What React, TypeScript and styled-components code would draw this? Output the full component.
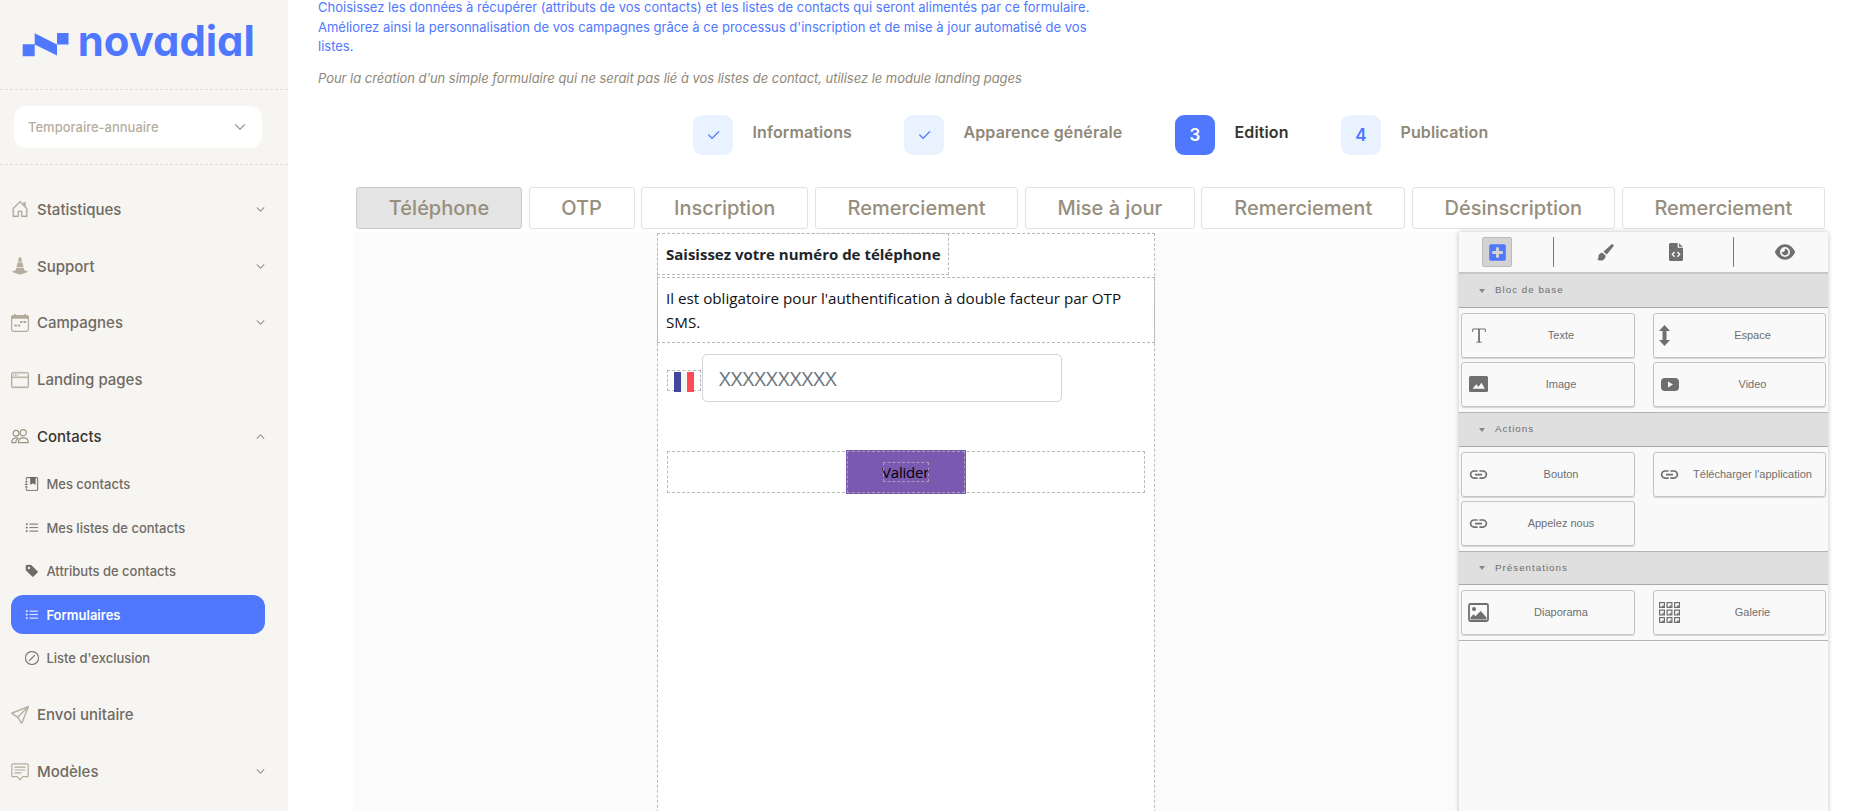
import React from 'react';
import {
    BsCheck2,
    BsChevronDown,
    BsChevronUp,
    BsConeStriped,
    BsHouseDoor,
    BsJournalBookmarkFill,
    BsListUl,
    BsSend,
    BsSlashCircle,
    BsTagFill,
    BsWindow,
} from 'react-icons/bs';
import { FaPlusSquare } from 'react-icons/fa';
import { FaEye } from 'react-icons/fa6';
import { MdLink } from 'react-icons/md';
import styled, { createGlobalStyle } from 'styled-components';

const GlobalStyle = createGlobalStyle`
    * {
        box-sizing: border-box;
    }
    body {
        margin: 0;
        overflow: hidden;
        background: #fff;
        font-family: Inter, sans-serif;
    }
`;

type MenuEntry = {
    label: string;
    icon: React.ReactNode;
    arrow?: 'up' | 'down';
    active?: boolean;
};

const MessageIcon = () => (
    <svg width="18" height="18" viewBox="0 0 18 18" fill="none" stroke="currentColor" strokeWidth="1.2">
        <path d="M2 .8h14a1.2 1.2 0 0 1 1.2 1.2v10.5a1.2 1.2 0 0 1-1.2 1.2h-4.2L9 16.8l-2.8-3.1H2a1.2 1.2 0 0 1-1.2-1.2V2A1.2 1.2 0 0 1 2 .8z" />
        <path d="M3.5 4.2h11M3.5 7h11M3.5 9.8h7" />
    </svg>
);

const CalendarIcon = () => (
    <svg width="18" height="18" viewBox="0 0 18 18">
        <rect x=".6" y="1.6" width="16.8" height="15.8" rx="1.8" fill="none" stroke="currentColor" strokeWidth="1.2" />
        <path d="M.6 4.8V3A1.4 1.4 0 0 1 2 1.6h1.3V0h1.5v1.6h8.4V0h1.5v1.6H16A1.4 1.4 0 0 1 17.4 3v1.8z" fill="currentColor" />
        <path d="M9 7h2.6v2H9zM12.5 7h2.6v2h-2.6zM3.3 10.5h2.6v2H3.3zM6.8 10.5h2.6v2H6.8z" fill="currentColor" />
    </svg>
);

const PeopleIcon = () => (
    <svg width="18" height="15" viewBox="0 0 18 15" fill="none" stroke="#9b9384" strokeWidth="1.2">
        <circle cx="5" cy="4.3" r="2.9" />
        <circle cx="12.2" cy="3.7" r="3.1" />
        <path d="M7.4 13.6c0-2.9 1.8-4.8 4.9-4.8s5 1.9 5 4.8z" />
        <path d="M6.8 9.2C3 8.3.7 10.3.7 13.6h4.1c0-1.7.7-3.2 2-4.4z" />
    </svg>
);

const mainMenu: MenuEntry[] = [
    { label: 'Statistiques', icon: <BsHouseDoor />, arrow: 'down' },
    { label: 'Support', icon: <BsConeStriped />, arrow: 'down' },
    { label: 'Campagnes', icon: <CalendarIcon />, arrow: 'down' },
    { label: 'Landing pages', icon: <BsWindow /> },
    { label: 'Contacts', icon: <PeopleIcon />, arrow: 'up', active: true },
];

const contactsMenu: MenuEntry[] = [
    { label: 'Mes contacts', icon: <BsJournalBookmarkFill /> },
    { label: 'Mes listes de contacts', icon: <BsListUl /> },
    { label: 'Attributs de contacts', icon: <BsTagFill /> },
    { label: 'Formulaires', icon: <BsListUl />, active: true },
    { label: "Liste d'exclusion", icon: <BsSlashCircle /> },
];

const bottomMenu: MenuEntry[] = [
    { label: 'Envoi unitaire', icon: <BsSend /> },
    { label: 'Modèles', icon: <MessageIcon />, arrow: 'down' },
];

const steps = [
    { label: 'Informations', mark: <BsCheck2 />, width: 211 },
    { label: 'Apparence générale', mark: <BsCheck2 />, width: 271 },
    { label: 'Edition', mark: '3', width: 166, current: true },
    { label: 'Publication', mark: '4', width: 160 },
];

const tabs = [
    { label: 'Téléphone', width: 166, selected: true },
    { label: 'OTP', width: 106 },
    { label: 'Inscription', width: 167 },
    { label: 'Remerciement', width: 203.5 },
    { label: 'Mise à jour', width: 170 },
    { label: 'Remerciement', width: 203.5 },
    { label: 'Désinscription', width: 203.5 },
    { label: 'Remerciement', width: 203.5 },
];

const BrushIcon = () => (
    <svg width="17" height="17" viewBox="0 0 17 17" fill="currentColor">
        <path d="M14.3.6c.7-.6 1.5-.6 2 0 .6.6.5 1.3 0 2L9.8 10.5 6.5 7.7z" />
        <path d="M5.7 8.9 8.6 11.5c.1 3.6-2.7 5.1-5.2 5.1-1.6 0-2.7-.6-3.4-1.5 1.2 0 1.4-.6 1.4-2.2 0-2.4 2.1-4.3 4.3-4z" />
    </svg>
);

const FileCodeIcon = () => (
    <svg width="14" height="18" viewBox="0 0 14 18">
        <path d="M1.5 0H8.7v4.7H14v11.8a1.5 1.5 0 0 1-1.5 1.5h-11A1.5 1.5 0 0 1 0 16.5v-15A1.5 1.5 0 0 1 1.5 0zM10 .2l3.8 3.5H10z" fill="currentColor" />
        <path d="M5.6 8.9 3.3 11.3l2.3 2.4M8.4 8.9l2.3 2.4-2.3 2.4" fill="none" stroke="#f9f9f9" strokeWidth="1.4" />
    </svg>
);

const TextIcon = () => (
    <svg width="14" height="15" viewBox="0 0 14 15" fill="none" stroke="currentColor">
        <path d="M.7 4V1h12.6v3M4.5 14.2h5" />
        <path d="M7 1v13" strokeWidth="1.8" />
    </svg>
);

const SpaceIcon = () => (
    <svg width="11" height="21" viewBox="0 0 11 21" fill="currentColor">
        <path d="M5.5 0 11 6H7.5v9H11l-5.5 6L0 15h3.5V6H0z" />
    </svg>
);

const ImageIcon = () => (
    <svg width="19" height="16" viewBox="0 0 19 16">
        <rect width="19" height="16" rx="1.5" fill="currentColor" />
        <path d="m3.5 12.8 3.8-4.6 2.2 2.6 3-4 3.3 6z" fill="#f9f9f9" />
    </svg>
);

const VideoIcon = () => (
    <svg width="18" height="13" viewBox="0 0 18 13">
        <rect width="18" height="13" rx="4" fill="currentColor" />
        <path d="m7 3.5 5 3-5 3z" fill="#f9f9f9" />
    </svg>
);

const SlideshowIcon = () => (
    <svg width="21" height="19" viewBox="0 0 21 19">
        <rect x="1" y="1" width="19" height="17" rx="1.5" fill="none" stroke="currentColor" strokeWidth="1.8" />
        <circle cx="6" cy="6" r="2" fill="currentColor" />
        <path d="M2.5 16.5v-2l3-3.3 2 2 5.2-5.2 5.8 6.5v2z" fill="currentColor" />
    </svg>
);

const GalleryIcon = () => (
    <svg width="21" height="21" viewBox="0 0 21 21">
        {[0, 7.5, 15].map((y) =>
            [0, 7.5, 15].map((x) => (
                <g key={`${x}-${y}`} transform={`translate(${x} ${y})`}>
                    <rect x=".6" y=".6" width="4.8" height="4.8" fill="none" stroke="currentColor" strokeWidth="1.2" />
                    <path d="M2.5 5l1.5-2L5.5 5z" fill="currentColor" />
                </g>
            )),
        )}
    </svg>
);

const sections = [
    {
        title: 'Bloc de base',
        blocks: [
            { label: 'Texte', icon: <TextIcon /> },
            { label: 'Espace', icon: <SpaceIcon />, narrow: true },
            { label: 'Image', icon: <ImageIcon /> },
            { label: 'Video', icon: <VideoIcon /> },
        ],
    },
    {
        title: 'Actions',
        blocks: [
            { label: 'Bouton', icon: <MdLink size={21} /> },
            { label: "Télécharger l'application", icon: <MdLink size={21} /> },
            { label: 'Appelez nous', icon: <MdLink size={21} /> },
        ],
    },
    {
        title: 'Présentations',
        blocks: [
            { label: 'Diaporama', icon: <SlideshowIcon /> },
            { label: 'Galerie', icon: <GalleryIcon /> },
        ],
    },
];

const Menu = ({ entries }: { entries: MenuEntry[] }) => (
    <>
        {entries.map((e) => (
            <MenuItem key={e.label} $active={e.active}>
                <MenuIcon>{e.icon}</MenuIcon>
                <span>{e.label}</span>
                {e.arrow && <MenuArrow>{e.arrow === 'up' ? <BsChevronUp /> : <BsChevronDown />}</MenuArrow>}
            </MenuItem>
        ))}
    </>
);

const Logo = () => (
    <LogoSvg viewBox="0 -15 244 60">
        <path d="M.7 21.3h12v12h-12zM12.7 10.3 35 21.5v11L12.7 21.500zM35 10h11.500v11.500H35z" />
        <text x="55.8" y="33" textLength="177" lengthAdjust="spacingAndGlyphs">
            novadial
        </text>
    </LogoSvg>
);

const App = () => (
    <>
        <GlobalStyle />
        <Page>
            <Sidebar>
                <LogoBox>
                    <Logo />
                </LogoBox>
                <AccountBox>
                    <AccountSelect>
                        Temporaire-annuaire
                        <BsChevronDown size={12} />
                    </AccountSelect>
                </AccountBox>
                <Nav>
                    <Menu entries={mainMenu} />
                    <SubMenu>
                        {contactsMenu.map((e) => (
                            <SubItem key={e.label} $active={e.active}>
                                {e.icon}
                                <span>{e.label}</span>
                            </SubItem>
                        ))}
                    </SubMenu>
                    <Menu entries={bottomMenu} />
                </Nav>
            </Sidebar>
            <Content>
                <Intro>
                    Choisissez les données à récupérer (attributs de vos contacts) et les listes de contacts qui seront
                    alimentés par ce formulaire.
                    <br />
                    Améliorez ainsi la personnalisation de vos campagnes grâce à ce processus d'inscription et de mise à
                    jour automatisé de vos
                    <br />
                    listes.
                </Intro>
                <Hint>
                    Pour la création d’un simple formulaire qui ne serait pas lié à vos listes de contact, utilisez le
                    module landing pages
                </Hint>
                <Steps>
                    {steps.map((s) => (
                        <Step key={s.label} $width={s.width}>
                            <StepMark $current={s.current}>{s.mark}</StepMark>
                            <StepLabel $current={s.current}>{s.label}</StepLabel>
                        </Step>
                    ))}
                </Steps>
                <Tabs>
                    {tabs.map((t, i) => (
                        <Tab key={i} $width={t.width} $selected={t.selected}>
                            {t.label}
                        </Tab>
                    ))}
                </Tabs>
                <Editor>
                    <Canvas>
                        <Title>Saisissez votre numéro de téléphone</Title>
                        <Paragraph>
                            Il est obligatoire pour l'authentification à double facteur par OTP
                            <br />
                            SMS.
                        </Paragraph>
                        <PhoneRow>
                            <FlagBox>
                                <Flag />
                            </FlagBox>
                            <PhoneInput placeholder="XXXXXXXXXX" />
                        </PhoneRow>
                        <SubmitRow>
                            <SubmitButton>
                                <SubmitLabel>Valider</SubmitLabel>
                            </SubmitButton>
                        </SubmitRow>
                    </Canvas>
                    <Panel>
                        <Toolbar>
                            <ToolButton $selected>
                                <FaPlusSquare size={19} />
                            </ToolButton>
                            <Divider />
                            <ToolButton>
                                <BrushIcon />
                            </ToolButton>
                            <ToolButton>
                                <FileCodeIcon />
                            </ToolButton>
                            <Divider />
                            <ToolButton>
                                <FaEye size={20} />
                            </ToolButton>
                        </Toolbar>
                        {sections.map((s) => (
                            <Section key={s.title}>
                                <SectionTitle>
                                    <Caret />
                                    {s.title}
                                </SectionTitle>
                                <Blocks>
                                    {s.blocks.map((b) => (
                                        <Block key={b.label}>
                                            <BlockIcon $narrow={b.narrow}>{b.icon}</BlockIcon>
                                            <BlockLabel>{b.label}</BlockLabel>
                                        </Block>
                                    ))}
                                </Blocks>
                            </Section>
                        ))}
                    </Panel>
                </Editor>
            </Content>
        </Page>
    </>
);

export default App;

const Page = styled.div`
    display: flex;
    width: 1851px;
    height: 811px;
    overflow: hidden;
`;

const Sidebar = styled.aside`
    width: 288px;
    flex-shrink: 0;
    background: #f7f5f2;
    color: #6f6a63;
`;

const LogoBox = styled.div`
    height: 90px;
    padding: 8px 0 0 22px;
    border-bottom: 1px dashed #dfdcd7;
`;

const LogoSvg = styled.svg`
    display: block;
    width: 244px;
    height: 60px;
    fill: #4f78ff;
    font-family: Inter, sans-serif;
    font-feature-settings: 'cv11';
    font-size: 42px;
    font-weight: 700;
`;

const AccountBox = styled.div`
    height: 75px;
    padding: 16px 26px 0 14px;
    border-bottom: 1px dashed #dfdcd7;
`;

const AccountSelect = styled.div`
    display: flex;
    align-items: center;
    justify-content: space-between;
    height: 42px;
    padding: 0 16px 0 14px;
    border-radius: 12px;
    background: #fff;
    color: #b5ad9e;
    font-size: 13px;
    font-weight: 500;

    svg {
        color: #8f8878;
        stroke: currentColor;
        stroke-width: 0.6;
    }
`;

const Nav = styled.nav`
    padding-top: 16px;
`;

const MenuItem = styled.div<{ $active?: boolean }>`
    display: flex;
    align-items: center;
    height: 56.8px;
    padding: 0 23px 0 11px;
    color: ${({ $active }) => ($active ? '#38352f' : '#6f6a63')};
    font-size: 15px;
    font-weight: 500;
`;

const MenuIcon = styled.span`
    display: flex;
    width: 26px;
    color: #b3ab9b;
    font-size: 18px;

    svg[stroke='currentColor'] {
        stroke-width: 0.25;
    }
    svg[fill='none'] {
        stroke-width: 1.2;
    }
`;

const MenuArrow = styled.span`
    display: flex;
    margin-left: auto;
    color: #8f8878;
    font-size: 9px;

    svg {
        stroke: currentColor;
        stroke-width: 0.8;
    }
`;

const SubMenu = styled.div`
    display: flex;
    flex-direction: column;
    gap: 4.5px;
    padding: 0 23px 8.6px 11px;
`;

const SubItem = styled.div<{ $active?: boolean }>`
    display: flex;
    align-items: center;
    gap: 7.4px;
    height: 39px;
    padding-left: 14px;
    border-radius: 12px;
    background: ${({ $active }) => ($active ? '#4f78ff' : 'none')};
    color: ${({ $active }) => ($active ? '#fff' : '#6f6a63')};
    font-size: 13px;
    font-weight: ${({ $active }) => ($active ? 600 : 500)};

    svg {
        width: 14px;
        height: 14px;
        stroke: currentColor;
        stroke-width: 0.2;
    }
`;

const Content = styled.main`
    flex: 1;
    min-width: 0;
`;

const Intro = styled.p`
    height: 56px;
    margin: -2px 0 0;
    padding-left: 30px;
    color: #4f78ff;
    font-size: 13px;
    line-height: 19.5px;
`;

const Hint = styled.p`
    height: 61px;
    margin: 0;
    padding: 14px 0 0 30px;
    color: #8f8878;
    font-size: 13px;
    font-style: italic;
    letter-spacing: -0.035px;
    line-height: 20px;
`;

const Steps = styled.div`
    display: flex;
    height: 72px;
    padding-left: 405px;
`;

const Step = styled.div<{ $width: number }>`
    display: flex;
    gap: 19.5px;
    width: ${({ $width }) => $width}px;
`;

const StepMark = styled.span<{ $current?: boolean }>`
    display: flex;
    align-items: center;
    justify-content: center;
    width: 40px;
    height: 40px;
    border-radius: 9px;
    background: ${({ $current }) => ($current ? '#4f78ff' : '#e9f3ff')};
    color: ${({ $current }) => ($current ? '#fff' : '#4f78ff')};
    font-size: 17px;
    font-weight: 600;

    svg {
        width: 15px;
        stroke: currentColor;
        stroke-width: 0.6;
    }
`;

const StepLabel = styled.span<{ $current?: boolean }>`
    color: ${({ $current }) => ($current ? '#38352f' : '#8f8878')};
    font-size: 16px;
    font-weight: 600;
    letter-spacing: 0.12px;
    line-height: 35px;
    white-space: nowrap;
`;

const Tabs = styled.div`
    display: flex;
    gap: 6.6px;
    height: 45px;
    padding-left: 68px;
`;

const Tab = styled.div<{ $width: number; $selected?: boolean }>`
    display: flex;
    align-items: center;
    justify-content: center;
    flex-shrink: 0;
    width: ${({ $width }) => $width}px;
    height: 42px;
    border: 1px solid ${({ $selected }) => ($selected ? '#c9c9c9' : '#e2e2e2')};
    border-radius: 3px;
    background: ${({ $selected }) => ($selected ? '#e4e4e4' : '#fff')};
    color: #978e7e;
    font-size: 20px;
    font-weight: 500;
`;

const Editor = styled.div`
    display: flex;
    height: 579px;
    width: 1475px;
    margin-left: 65px;
    padding-left: 304px;
    background: linear-gradient(#fbfbfb, #fbfbfb) no-repeat 0 0 / 1106px 100%;
`;

const Canvas = styled.div`
    width: 498px;
    height: 640px;
    margin-top: 1px;
    outline: 1px dashed #bbb;
    outline-offset: -1px;
    background: #fff;
    color: #111;
    font-family: 'Open Sans', sans-serif;
    font-size: 16px;
`;

const Title = styled.div`
    width: 292px;
    height: 42px;
    padding: 0 8px;
    border: 1px dashed #b8b8b8;
    color: #212529;
    font-size: 15px;
    font-weight: 700;
    line-height: 40px;
    white-space: nowrap;
`;

const Paragraph = styled.div`
    height: 66px;
    margin-top: 2px;
    padding: 8px;
    border: 1px dashed #b8b8b8;
    font-size: 15.2px;
    line-height: 24px;
    white-space: nowrap;
`;

const PhoneRow = styled.div`
    display: flex;
    align-items: flex-start;
    gap: 1px;
    height: 98px;
    padding: 11px 0 0 10px;
`;

const FlagBox = styled.span`
    display: flex;
    justify-content: center;
    width: 34px;
    height: 21px;
    margin-top: 16px;
    border: 1px dashed #b8b8b8;
`;

const Flag = styled.span`
    width: 20px;
    height: 20px;
    margin-top: 1px;
    background: linear-gradient(90deg, #41479b 0 33%, #f5f5f5 33% 66%, #ff4b55 66%);
`;

const PhoneInput = styled.input`
    width: 360px;
    height: 48px;
    padding: 0 16px;
    border: 1px solid #ced4da;
    border-radius: 5px;
    background: #fff;
    font-family: 'Open Sans', sans-serif;
    font-size: 20.4px;
    outline: none;

    &::placeholder {
        color: #6c757d;
    }
`;

const SubmitRow = styled.div`
    display: flex;
    align-items: center;
    justify-content: center;
    height: 42px;
    margin: 10px 10px 0;
    border: 1px dashed #bbb;
`;

const SubmitButton = styled.button`
    flex-shrink: 0;
    width: 120px;
    height: 44px;
    padding: 0;
    border: 0;
    background: #7a5ab0;
    outline: 1px dashed #a79bb8;
    outline-offset: -2px;
    color: #000;
    font-family: 'Open Sans', sans-serif;
    font-size: 15px;
`;

const SubmitLabel = styled.span`
    display: inline-block;
    width: 46px;
    height: 20px;
    outline: 1px dashed #a79bb8;
    outline-offset: -1px;
    letter-spacing: -0.2px;
    line-height: 20px;
    text-indent: -1px;
`;

const Panel = styled.div`
    width: 369px;
    height: 640px;
    margin-left: 304px;
    background: #f9f9f9;
    box-shadow: 0 0 5px rgba(0, 0, 0, 0.24);
    color: #6f6f6f;
    font-family: 'Liberation Sans', Arial, sans-serif;
`;

const Toolbar = styled.div`
    display: grid;
    grid-template-columns: 76px 36px 68px 74px 40px 64px;
    align-items: center;
    justify-items: center;
    height: 42px;
    border-bottom: 2px solid #c6c6c6;
`;

const ToolButton = styled.span<{ $selected?: boolean }>`
    display: flex;
    align-items: center;
    justify-content: center;
    width: 30px;
    height: 30px;
    border: 1px solid ${({ $selected }) => ($selected ? '#bbb' : 'transparent')};
    border-radius: 2px;
    background: ${({ $selected }) => ($selected ? '#d3d3d3' : 'none')};
    color: ${({ $selected }) => ($selected ? '#4f78ff' : '#6f6f6f')};
`;

const Divider = styled.span`
    width: 1px;
    height: 30px;
    background: #777;
`;

const SectionTitle = styled.div`
    display: flex;
    align-items: center;
    gap: 10px;
    height: 34px;
    padding: 0 0 2px 20px;
    border-bottom: 1px solid #a8a8a8;
    background: #dfdfdf;
    font-size: 9.8px;
    letter-spacing: 1px;
`;

const Section = styled.section`
    &:last-child ${SectionTitle} {
        height: 33px;
    }
`;

const Caret = styled.span`
    margin-top: 2px;
    border: 3.5px solid transparent;
    border-top: 4px solid #8f8878;
    border-bottom: 0;
`;

const Blocks = styled.div`
    display: grid;
    grid-template-columns: 174px 173px;
    column-gap: 18px;
    row-gap: 4px;
    padding: 5px 2px;
    border-bottom: 1px solid #b5b5b5;
`;

const Block = styled.div`
    display: flex;
    align-items: center;
    height: 45px;
    padding-bottom: 1px;
    border: 1px solid #c4c4c4;
    border-radius: 3px;
    box-shadow: 0 1px 1px rgba(0, 0, 0, 0.15);
    font-size: 11px;

    &:nth-child(even) > span:first-child {
        margin: 0 1px 0 -1px;
    }
`;

const BlockIcon = styled.span<{ $narrow?: boolean }>`
    display: flex;
    justify-content: ${({ $narrow }) => ($narrow ? 'flex-start' : 'center')};
    width: 33px;
    padding-left: ${({ $narrow }) => ($narrow ? '6px' : '0')};
`;

const BlockLabel = styled.span`
    flex: 1;
    padding-right: 7px;
    text-align: center;
    white-space: nowrap;
`;
